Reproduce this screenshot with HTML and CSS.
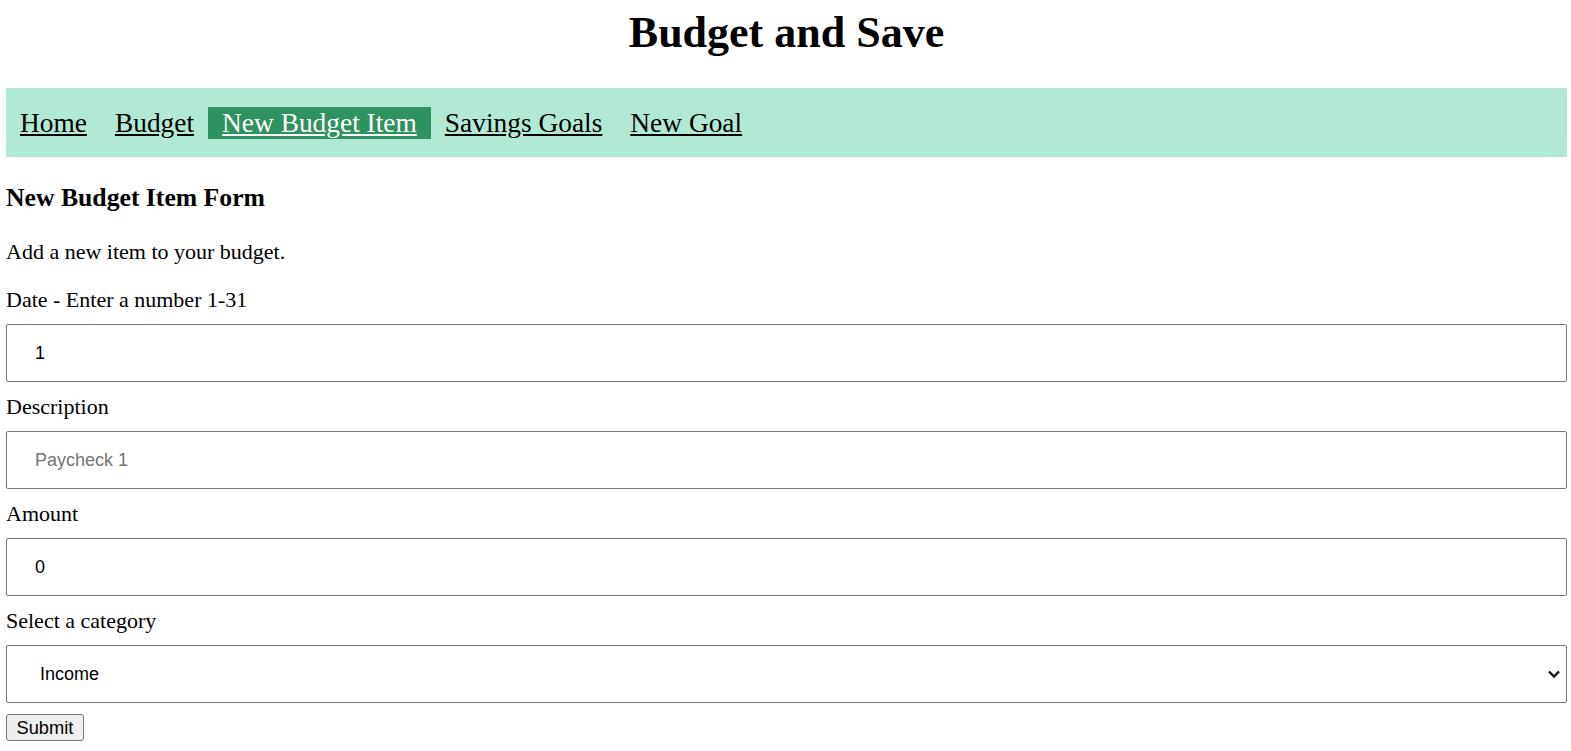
FILE: index.html
```html
<!DOCTYPE html>
<html lang="en">
<head>
<meta charset="utf-8">
<title>Budget and Save</title>
<link rel="stylesheet" href="styles.css">
</head>
<body>
<h1 class="title">Budget and Save</h1>
<nav class="topnav">
  <a href="#" class="nav-link">Home</a>
  <a href="#" class="nav-link">Budget</a>
  <a href="#" class="nav-link active">New Budget Item</a>
  <a href="#" class="nav-link">Savings Goals</a>
  <a href="#" class="nav-link">New Goal</a>
</nav>
<main class="content">
  <h3 class="form-title">New Budget Item Form</h3>
  <p class="intro">Add a new item to your budget.</p>
  <form class="budget-form">
    <label class="field-label" for="date">Date - Enter a number 1-31</label>
    <input class="field" id="date" type="text" value="1">
    <label class="field-label" for="desc">Description</label>
    <input class="field" id="desc" type="text" placeholder="Paycheck 1">
    <label class="field-label" for="amount">Amount</label>
    <input class="field" id="amount" type="text" value="0">
    <label class="field-label" for="category">Select a category</label>
    <div class="select-wrap">
      <select class="field select" id="category">
        <option>Income</option>
        <option>Housing</option>
        <option>Food</option>
      </select>
      <svg class="select-arrow" width="14" height="10" viewBox="0 0 14 10" aria-hidden="true"><path d="M2 2.5 L7 7.5 L12 2.5" fill="none" stroke="#111" stroke-width="2.4"/></svg>
    </div>
    <button class="submit" type="button">Submit</button>
  </form>
</main>
</body>
</html>
```

FILE: styles.css
```css
html, body {
  background: #fff;
}
body {
  margin: 0 4px 0 6px;
  font-family: "Liberation Serif", "Times New Roman", serif;
  font-size: 22px;
  line-height: 25px;
  color: #000;
}
.title {
  margin: 8px 0 30px;
  font-size: 44px;
  line-height: 50px;
  font-weight: bold;
  text-align: center;
}
.topnav {
  display: flex;
  background: #b0ead5;
  padding: 19px 0 18px;
}
.nav-link {
  display: block;
  padding: 0 14px;
  font-size: 27.4px;
  line-height: 32px;
  color: #000;
  text-decoration: underline;
}
.nav-link.active {
  background: #2e9360;
  color: #fff;
}
.form-title {
  margin: 26px 0 27px;
  font-size: 25.7px;
  line-height: 29px;
  font-weight: bold;
}
.intro {
  margin: 0 0 23px;
}
.budget-form {
  display: flex;
  flex-direction: column;
  align-items: flex-start;
}
.field-label {
  display: block;
  line-height: 25px;
}
.field {
  box-sizing: border-box;
  width: 100%;
  height: 58px;
  margin: 12px 0;
  padding: 0 28px;
  border: 1px solid #767676;
  border-radius: 2px;
  background: #fff;
  font-family: "Liberation Sans", Arial, sans-serif;
  font-size: 18px;
  color: #000;
  outline: none;
}
.field::placeholder {
  color: #757575;
}
.select-wrap {
  position: relative;
  width: 100%;
  margin: 12px 0 11px;
}
.select {
  margin: 0;
  padding: 0 28px 0 33px;
  appearance: none;
  -webkit-appearance: none;
}
.select-arrow {
  position: absolute;
  right: 6px;
  top: 24px;
}
.submit {
  height: 27px;
  padding: 0 9.5px;
  border: 1px solid #767676;
  border-radius: 3px;
  background: #efefef;
  font-family: "Liberation Sans", Arial, sans-serif;
  font-size: 18.3px;
  line-height: 25px;
  color: #000;
}
```
